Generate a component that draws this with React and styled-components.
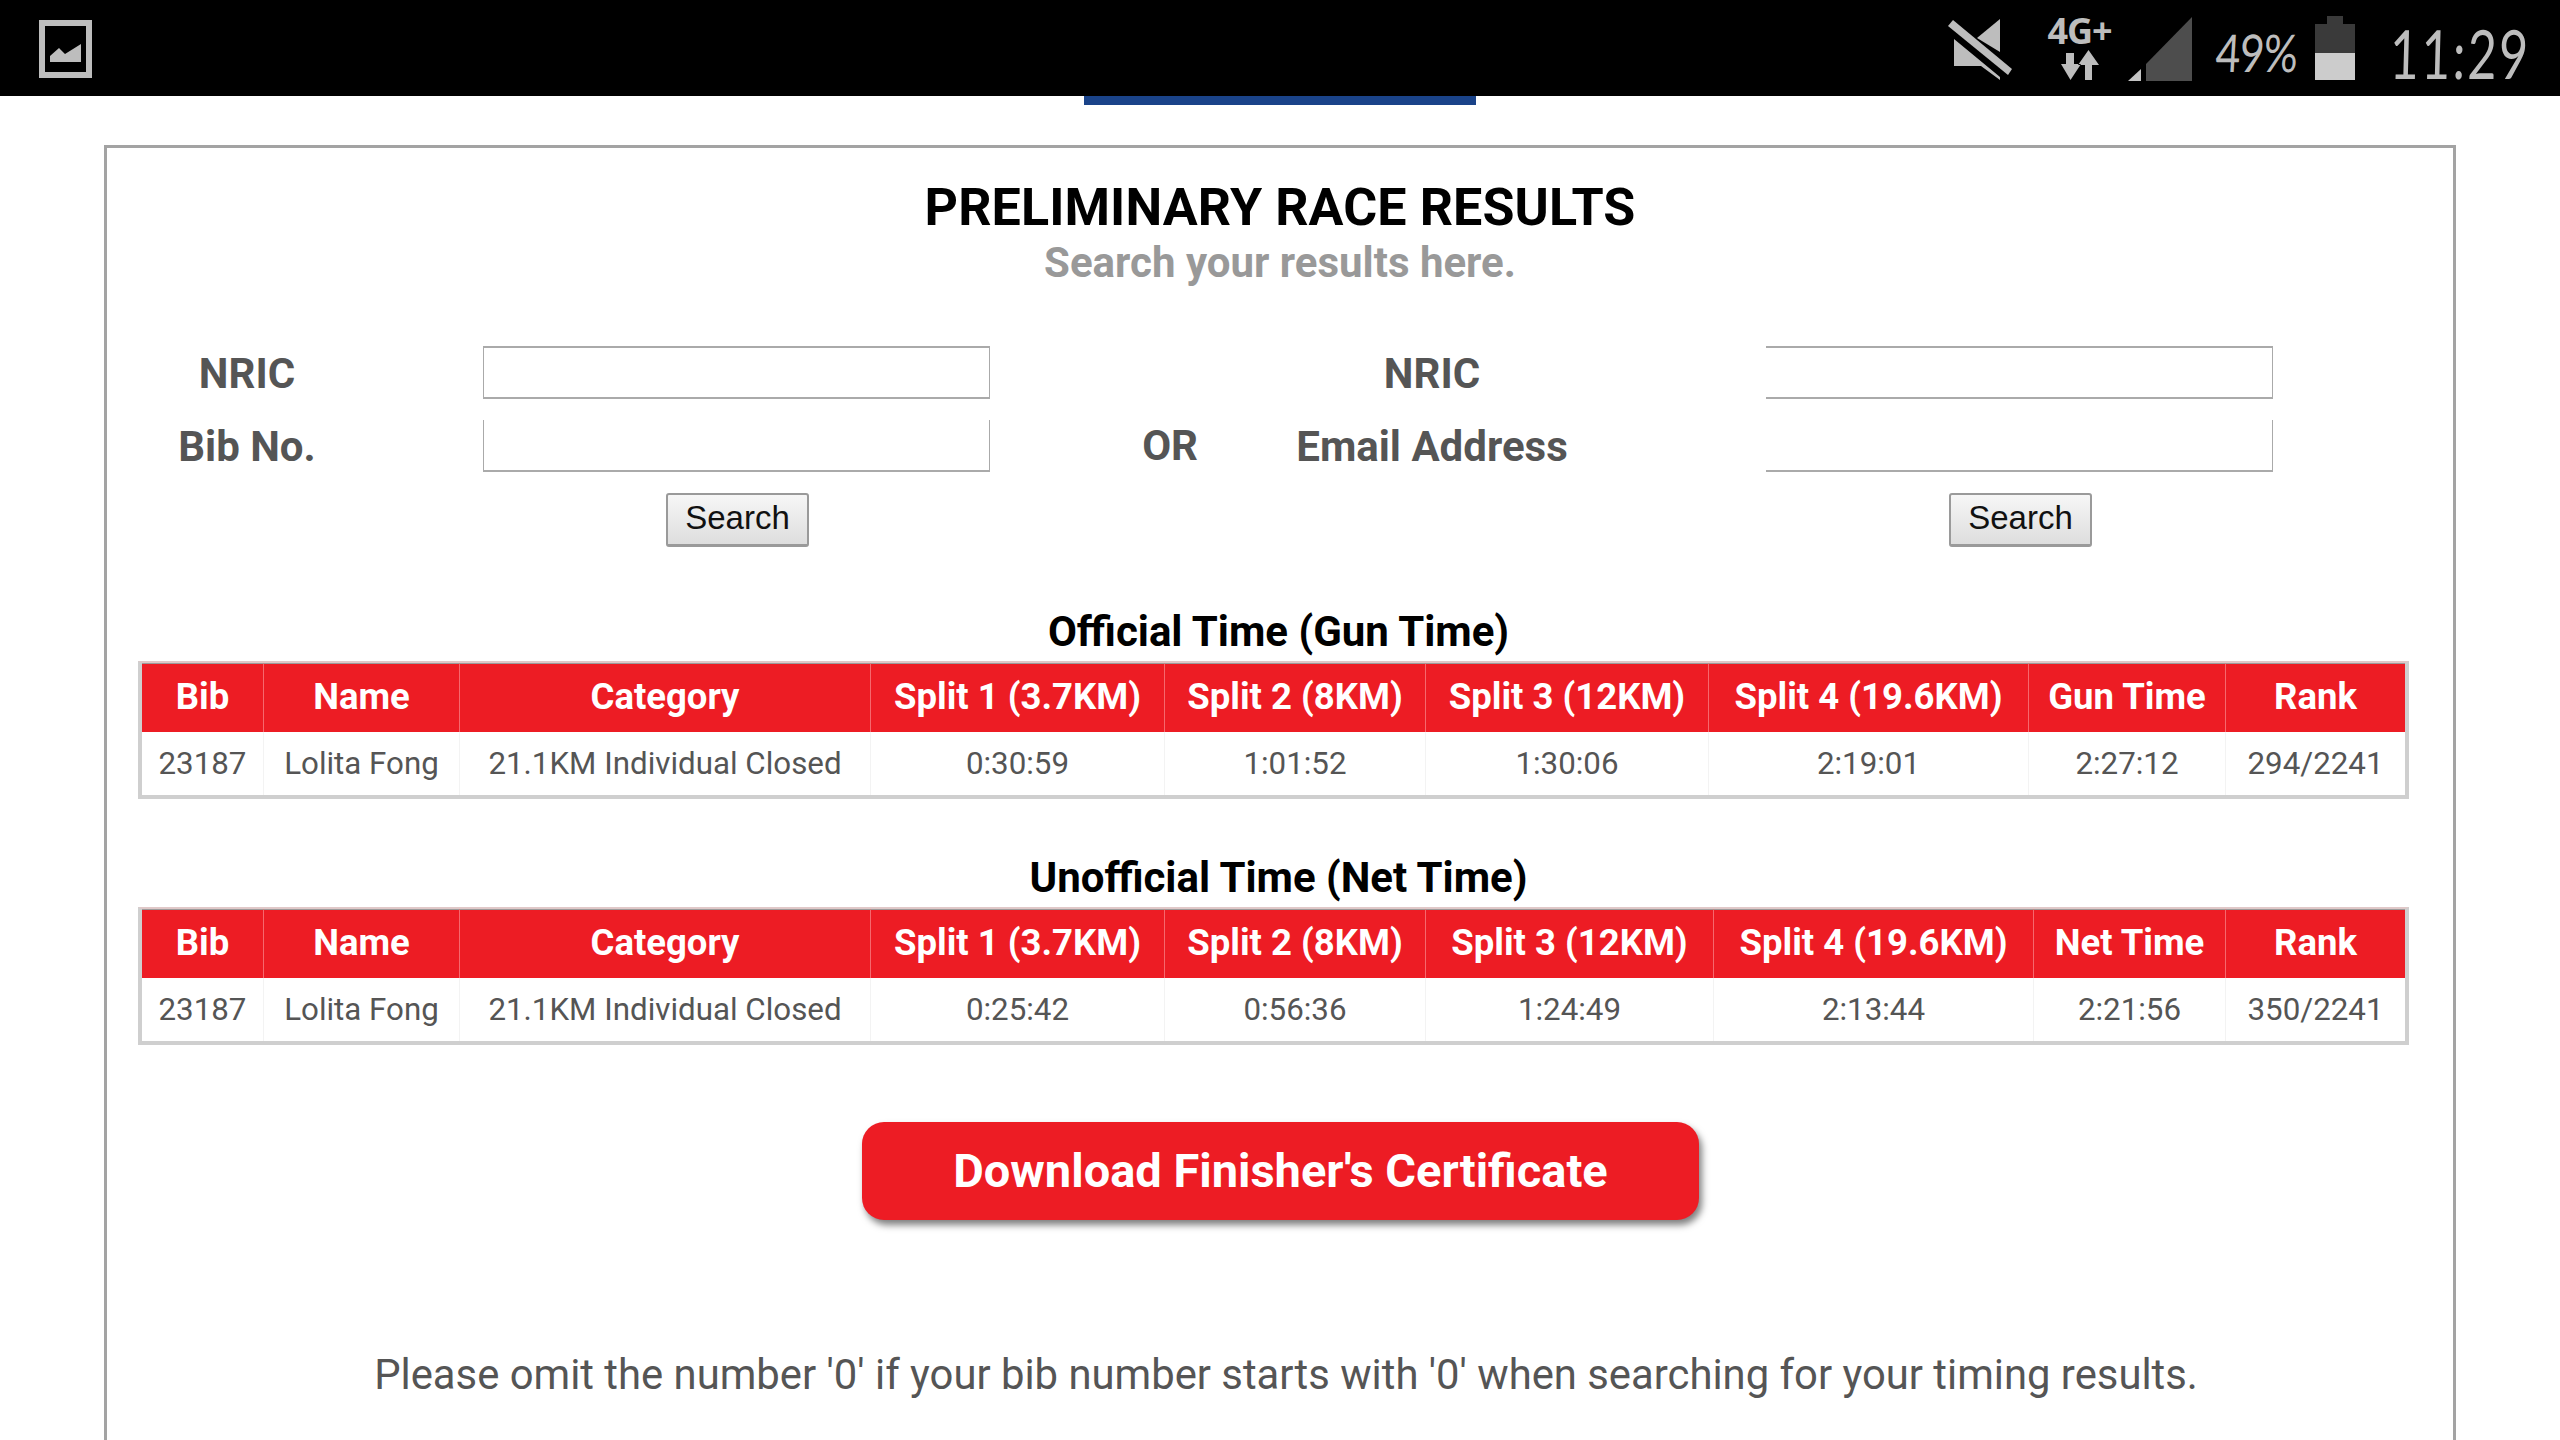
import React from 'react';
import styled, { createGlobalStyle } from 'styled-components';

const RED = '#ed1c24';

const GlobalStyle = createGlobalStyle`
  html, body {
    margin: 0;
    padding: 0;
    background: #fff;
    font-family: Roboto, "Liberation Sans", sans-serif;
  }
`;

const Screen = styled.div`
  width: 2560px;
  height: 1440px;
  overflow: hidden;
  display: flex;
  flex-direction: column;
  background: #fff;
`;

const StatusBar = styled.div`
  height: 96px;
  flex: none;
  background: #000;
  display: flex;
  align-items: flex-start;
  justify-content: space-between;
  padding: 0 35px 0 39px;
  box-sizing: border-box;
`;

const StatusIcons = styled.div`
  display: flex;
  align-items: flex-start;
`;

const Glyph = styled.svg`
  display: block;
  flex: none;
  margin-top: ${(props) => props.$top}px;
  margin-left: ${(props) => props.$left || 0}px;
`;

const NetworkType = styled.div`
  width: 67px;
  margin-left: 34px;
  margin-top: 12px;
  display: flex;
  flex-direction: column;
  align-items: center;
  color: #bdbdbd;
  font: 700 36px/38px "Open Sans", sans-serif;
  letter-spacing: -1px;
`;

const Percent = styled.div`
  margin-left: 24px;
  margin-top: 26px;
  width: 84px;
  color: #bdbdbd;
  font: 400 52px/52px Lato, sans-serif;
  letter-spacing: -1px;
  white-space: nowrap;
  transform-origin: left center;
  transform: scaleX(0.82) skewX(-4deg);
`;

const Clock = styled.div`
  width: 135px;
  margin-left: 35px;
  margin-top: 18px;
  color: #bdbdbd;
  font: 400 68px/70px Lato, sans-serif;
  letter-spacing: 3px;
  white-space: nowrap;
  transform-origin: left center;
  transform: scaleX(0.74) skewX(-2deg);
`;

const TabMarker = styled.div`
  width: 392px;
  height: 9px;
  flex: none;
  margin: 0 auto;
  background: #1a4389;
`;

const Card = styled.div`
  margin: 40px 0 0 104px;
  width: 2352px;
  height: 1400px;
  flex: none;
  box-sizing: border-box;
  border: 3px solid #a3a3a3;
  padding: 0 0 0 31px;
`;

const Title = styled.h1`
  margin: 28px 0 0 -31px;
  text-align: center;
  color: #000;
  font-size: 52px;
  line-height: 64px;
  font-weight: 700;
  letter-spacing: 0.1px;
`;

const Subtitle = styled.h2`
  margin: 0 0 0 -31px;
  text-align: center;
  color: #999;
  font-size: 42px;
  line-height: 46px;
  font-weight: 700;
`;

const SearchRow = styled.div`
  display: flex;
  align-items: flex-start;
  margin: 60px 0 0 4px;
`;

const SearchGroup = styled.div`
  display: grid;
  grid-template-columns: ${(props) => props.$labelWidth}px ${(props) => props.$inputWidth}px;
  column-gap: ${(props) => props.$gap}px;
  row-gap: 21px;
  align-items: center;
`;

const Label = styled.label`
  padding-top: 1px;
  text-align: center;
  color: #555;
  font-size: 42px;
  font-weight: 700;
  white-space: nowrap;
`;

const Field = styled.input`
  display: block;
  box-sizing: border-box;
  width: 100%;
  height: ${(props) => (props.$noTop ? 52 : 53)}px;
  padding: 0;
  background: #fff;
  border-style: solid;
  border-color: #aaa;
  border-width: ${(props) => (props.$noTop ? '0' : '2px')} 1px 2px ${(props) => (props.$open ? '0' : '1px')};
`;

const SearchButton = styled.button`
  grid-column: 2;
  justify-self: center;
  width: 143px;
  height: 54px;
  margin-left: 2px;
  padding: 0 0 4px;
  box-sizing: border-box;
  border: 2px solid #9a9a9a;
  border-bottom-width: 3px;
  border-radius: 3px;
  background: linear-gradient(#f6f6f6, #dedede);
  color: #111;
  font: 400 33px "Liberation Sans", sans-serif;
`;

const Or = styled.div`
  width: 242px;
  flex: none;
  box-sizing: border-box;
  padding: 74px 34px 0 0;
  text-align: right;
  color: #555;
  font-size: 42px;
  line-height: 52px;
  font-weight: 700;
`;

const ResultSection = styled.section`
  margin-top: ${(props) => props.$top}px;
`;

const TableTitle = styled.h3`
  margin: 0 0 0 -34px;
  height: 54px;
  text-align: center;
  color: #000;
  font-size: 42px;
  line-height: 50px;
  font-weight: 700;
`;

const ResultTable = styled.table`
  width: 2270px;
  table-layout: fixed;
  border-collapse: separate;
  border-spacing: 0;
  border: 4px solid #cfcfcf;
  border-top: 2px solid #e0c8c8;
`;

const Column = styled.col`
  width: ${(props) => props.$width}px;
`;

const HeadCell = styled.th`
  height: 69px;
  padding: 0 0 3px;
  box-sizing: border-box;
  background: ${RED};
  border-top: 1px solid #9a9a9a;
  border-left: 1px solid #f6686d;
  color: #fff;
  font-size: 36.500px;
  font-weight: 700;
  white-space: nowrap;
  &:first-child {
    border-left: 0;
  }
`;

const BodyCell = styled.td`
  height: 63px;
  padding: 0;
  box-sizing: border-box;
  border-left: 1px solid #f3f3f3;
  text-align: center;
  color: #555;
  font-size: 31.300px;
  white-space: nowrap;
  &:first-child {
    border-left: 0;
  }
`;

const DownloadButton = styled.a`
  display: flex;
  align-items: center;
  justify-content: center;
  width: 837px;
  height: 98px;
  margin: 77px 0 0 724px;
  padding-bottom: 2px;
  box-sizing: border-box;
  border-radius: 22px;
  background: ${RED};
  color: #fff;
  font-size: 47px;
  font-weight: 700;
  box-shadow: 3px 5px 7px rgba(0, 0, 0, 0.5);
`;

const Note = styled.p`
  margin: 127px 0 0 -19px;
  text-align: center;
  color: #555;
  font-size: 41.800px;
  line-height: 56px;
`;

const RESULTS = [
  {
    title: 'Official Time (Gun Time)',
    top: 60,
    widths: [121, 196, 411, 294, 261, 283, 320, 197, 180],
    heads: ['Bib', 'Name', 'Category', 'Split 1 (3.7KM)', 'Split 2 (8KM)', 'Split 3 (12KM)', 'Split 4 (19.6KM)', 'Gun Time', 'Rank'],
    row: ['23187', 'Lolita Fong', '21.1KM Individual Closed', '0:30:59', '1:01:52', '1:30:06', '2:19:01', '2:27:12', '294/2241'],
  },
  {
    title: 'Unofficial Time (Net Time)',
    top: 54,
    widths: [121, 196, 411, 294, 261, 288, 320, 192, 180],
    heads: ['Bib', 'Name', 'Category', 'Split 1 (3.7KM)', 'Split 2 (8KM)', 'Split 3 (12KM)', 'Split 4 (19.6KM)', 'Net Time', 'Rank'],
    row: ['23187', 'Lolita Fong', '21.1KM Individual Closed', '0:25:42', '0:56:36', '1:24:49', '2:13:44', '2:21:56', '350/2241'],
  },
];

const StatusBarContent = () => (
  <StatusBar>
    <Glyph $top={20} width="53" height="58" viewBox="0 0 53 58">
      <path
        fillRule="evenodd"
        fill="#bdbdbd"
        d="M0 0H53V58H0ZM6 6V52H47V6ZM11 42V36L20 28L26 34L42 24V42Z"
      />
    </Glyph>
    <StatusIcons>
      <Glyph $top={19} width="64" height="61" viewBox="0 0 64 61">
        <g fill="#bdbdbd">
          <path d="M52 0V33L29 19Z" />
          <path d="M6 20L52 58V61L33 47H6Z" />
          <path d="M0 7L5 1L64 50L60 56Z" />
        </g>
      </Glyph>
      <NetworkType>
        4G+
        <svg width="38" height="30" viewBox="0 0 38 30">
          <path fill="#bdbdbd" d="M5 3H13V14H20L9.500 30L0 14H5Z M24 30H31V15H38L27.500 0L17 15H24Z" />
        </svg>
      </NetworkType>
      <Glyph $top={17} $left={15} width="64" height="64" viewBox="0 0 64 64">
        <path fill="#c4c4c4" d="M13 52V64H0Z" />
        <path fill="#4d4d4d" d="M18 47L64 0V64H18Z" />
      </Glyph>
      <Percent>49%</Percent>
      <Glyph $top={16} $left={15} width="40" height="64" viewBox="0 0 40 64">
        <path fill="#3a3a3a" d="M12 0H28V8H40V37H0V8H12Z" />
        <path fill="#cccccc" d="M0 37H40V64H0Z" />
      </Glyph>
      <Clock>11:29</Clock>
    </StatusIcons>
  </StatusBar>
);

const App = () => (
  <Screen>
    <GlobalStyle />
    <StatusBarContent />
    <TabMarker />
    <Card>
      <Title>PRELIMINARY RACE RESULTS</Title>
      <Subtitle>Search your results here.</Subtitle>

      <SearchRow>
        <SearchGroup $labelWidth={210} $inputWidth={507} $gap={131}>
          <Label>NRIC</Label>
          <Field />
          <Label>Bib No.</Label>
          <Field $noTop />
          <SearchButton>Search</SearchButton>
        </SearchGroup>
        <Or>OR</Or>
        <SearchGroup $labelWidth={400} $inputWidth={507} $gap={134}>
          <Label>NRIC</Label>
          <Field $open />
          <Label>Email Address</Label>
          <Field $open $noTop />
          <SearchButton>Search</SearchButton>
        </SearchGroup>
      </SearchRow>

      {RESULTS.map((result) => (
        <ResultSection key={result.title} $top={result.top}>
          <TableTitle>{result.title}</TableTitle>
          <ResultTable>
            <colgroup>
              {result.widths.map((width, i) => (
                <Column key={i} $width={width} />
              ))}
            </colgroup>
            <thead>
              <tr>
                {result.heads.map((head) => (
                  <HeadCell key={head}>{head}</HeadCell>
                ))}
              </tr>
            </thead>
            <tbody>
              <tr>
                {result.row.map((value) => (
                  <BodyCell key={value}>{value}</BodyCell>
                ))}
              </tr>
            </tbody>
          </ResultTable>
        </ResultSection>
      ))}

      <DownloadButton>Download Finisher's Certificate</DownloadButton>
      <Note>Please omit the number '0' if your bib number starts with '0' when searching for your timing results.</Note>
    </Card>
  </Screen>
);

export default App;
